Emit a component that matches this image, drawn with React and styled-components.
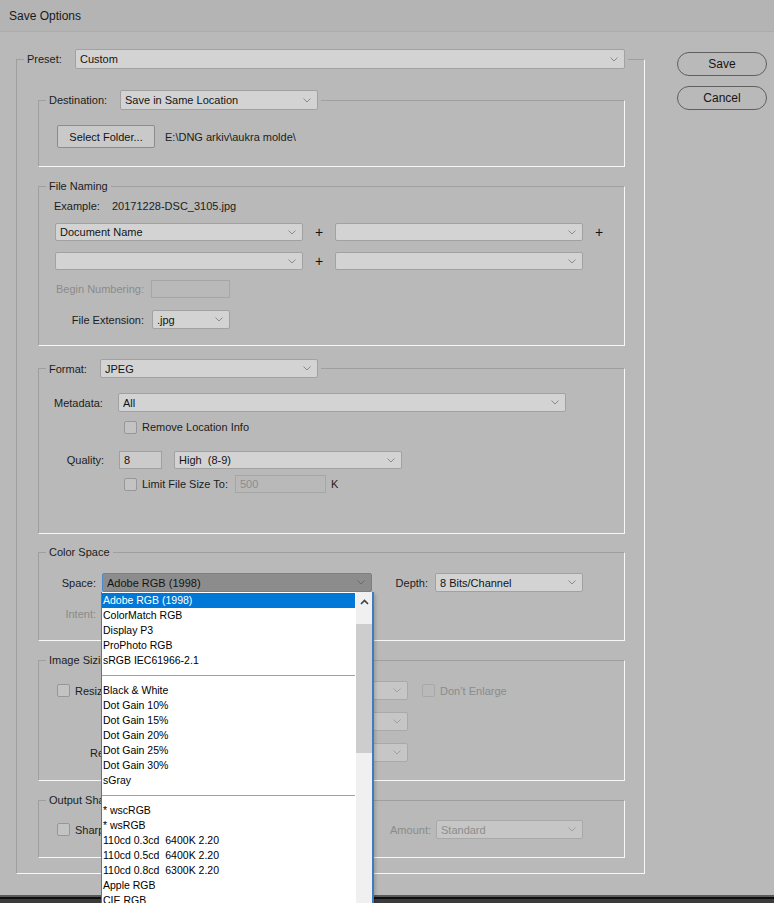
import React from "react";
import styled, { createGlobalStyle, css } from "styled-components";

const GlobalStyle = createGlobalStyle`
  html, body {
    margin: 0;
    padding: 0;
    background: #b9b9b9;
  }
  body {
    font-family: "Liberation Sans", Arial, sans-serif;
    font-size: 11px;
    color: #1c1c1c;
  }
  * {
    box-sizing: border-box;
  }
`;

const Window = styled.div`
  position: relative;
  width: 774px;
  height: 903px;
  overflow: hidden;
  display: flex;
  flex-direction: column;
  background: #b9b9b9;
`;

const TitleBar = styled.div`
  flex: none;
  height: 32px;
  padding-left: 9px;
  display: flex;
  align-items: center;
  font-size: 12px;
  color: #1a1a1a;
  background: #b4b4b4;
  border-bottom: 1px solid #acacac;
`;

const Body = styled.div`
  flex: 1;
  display: flex;
  align-items: flex-start;
  gap: 32px;
  padding: 17px 0 0 16px;
`;

const BottomStrip = styled.div`
  flex: none;
  height: 8px;
  background: linear-gradient(#5a5a5a 0 2px, #0e0e0e 2px 4px, #3b3b3b 4px);
`;

const Group = styled.fieldset`
  margin: 0;
  padding: 0;
  min-width: 0;
  flex: none;
  width: ${({ $w }) => ($w ? `${$w}px` : "auto")};
  height: ${({ $h }) => $h}px;
  margin-top: ${({ $mt }) => $mt || 0}px;
  border: 1px solid;
  border-color: #9f9f9f #f7f7f7 #f7f7f7 #9f9f9f;
`;

const Legend = styled.legend`
  margin-left: 7px;
  padding: 0 3px;
  line-height: 14px;
`;

const LegendRow = styled.div`
  display: flex;
  align-items: center;
`;

const Content = styled.div`
  display: flex;
  flex-direction: column;
  padding: ${({ $pad }) => $pad};
`;

const Row = styled.div`
  display: flex;
  align-items: center;
  gap: ${({ $gap }) => $gap || 0}px;
  margin-top: ${({ $mt }) => $mt || 0}px;
  padding-left: ${({ $pl }) => $pl || 0}px;
  line-height: 14px;
`;

const Caption = styled.span`
  flex: none;
  white-space: nowrap;
  width: ${({ $w }) => ($w ? `${$w}px` : "auto")};
  text-align: ${({ $right }) => ($right ? "right" : "left")};
  padding-right: ${({ $pr }) => $pr || 0}px;
  color: ${({ $disabled }) => ($disabled ? "#8b8b8b" : "#1c1c1c")};
`;

const selectVariants = {
  normal: css`
    background: #d3d3d3;
    border-color: #a1a1a1;
    color: #141414;
  `,
  disabled: css`
    background: #c6c6c6;
    border-color: #a9a9a9;
    color: #8d8d8d;
  `,
  focused: css`
    background: #8c8c8c;
    border-color: #4d89cf;
    color: #141414;
  `,
};

const SelectBox = styled.div`
  flex: none;
  width: ${({ $w }) => $w}px;
  height: ${({ $h }) => $h || 19}px;
  display: flex;
  align-items: center;
  justify-content: space-between;
  gap: 6px;
  padding: 0 6px 0 4px;
  border: 1px solid;
  border-radius: 2px;
  ${({ $variant }) => selectVariants[$variant || "normal"]}
`;

const SelectText = styled.span`
  overflow: hidden;
  white-space: pre;
  text-overflow: ellipsis;
`;

const Field = styled.div`
  flex: none;
  width: ${({ $w }) => $w}px;
  height: 18px;
  display: flex;
  align-items: center;
  padding-left: 4px;
  border: 1px solid ${({ $disabled }) => ($disabled ? "#a6a6a6" : "#a0a0a0")};
  background: ${({ $disabled }) => ($disabled ? "transparent" : "#cbcbcb")};
  color: ${({ $disabled }) => ($disabled ? "#8d8d8d" : "#141414")};
`;

const Check = styled.span`
  flex: none;
  width: 13px;
  height: 13px;
  margin-left: ${({ $ml }) => $ml || 0}px;
  border-radius: 2px;
  border: 1px solid ${({ $disabled }) => ($disabled ? "#a8a8a8" : "#979797")};
  background: ${({ $disabled }) => ($disabled ? "transparent" : "#c3c3c3")};
`;

const PushButton = styled.div`
  flex: none;
  width: 98px;
  height: 23px;
  display: flex;
  align-items: center;
  justify-content: center;
  border: 1px solid #8c8c8c;
  border-radius: 2px;
  background: #c9c9c9;
  color: #141414;
`;

const Plus = styled.span`
  flex: none;
  width: 32px;
  text-align: center;
  font-size: 14px;
  color: #111;
`;

const Spacer = styled.span`
  flex: none;
  width: ${({ $w }) => $w}px;
`;

const ButtonColumn = styled.div`
  display: flex;
  flex-direction: column;
  gap: 10px;
  margin-top: 3px;
`;

const PillButton = styled.div`
  width: 90px;
  height: 24px;
  display: flex;
  align-items: center;
  justify-content: center;
  border: 1px solid #5f5f5f;
  border-radius: 12px;
  font-size: 12px;
  color: #151515;
`;

const ListBox = styled.div`
  position: absolute;
  left: 101px;
  top: 592px;
  width: 273px;
  height: 320px;
  display: flex;
  background: #fff;
  border-left: 1px solid #3d7cc4;
  border-right: 2px solid #3d7cc4;
  box-shadow: 2px 2px 3px rgba(0, 0, 0, 0.15);
  font-size: 10.5px;
`;

const Items = styled.div`
  flex: 1;
  display: flex;
  flex-direction: column;
  padding-top: 1px;
  overflow: hidden;
`;

const Item = styled.div`
  flex: none;
  height: 15px;
  line-height: 15px;
  padding-left: 1px;
  white-space: pre;
  color: ${({ $selected }) => ($selected ? "#fff" : "#000")};
  background: ${({ $selected }) => ($selected ? "#0078d7" : "transparent")};
  margin-right: ${({ $selected }) => ($selected ? "1px" : "0")};
`;

const Separator = styled.div`
  flex: none;
  height: 15px;
  display: flex;
  align-items: center;
  padding-right: 1px;
  &::after {
    content: "";
    flex: 1;
    height: 1px;
    background: #a0a0a0;
  }
`;

const ScrollTrack = styled.div`
  flex: none;
  width: 16px;
  display: flex;
  flex-direction: column;
  background: #f0f0f0;
`;

const ScrollUp = styled.div`
  height: 18px;
  display: flex;
  align-items: center;
  justify-content: center;
  padding-top: 2px;
`;

const ScrollThumb = styled.div`
  margin-top: 14px;
  height: 129px;
  background: #cdcdcd;
`;

const Chevron = ({ color = "#8a8a8a" }) => (
  <svg width="8" height="5" viewBox="0 0 8 5" style={{ flex: "none" }}>
    <polyline points="0.5,0.5 4,4 7.5,0.5" fill="none" stroke={color} strokeWidth="1" />
  </svg>
);

const Select = ({ w, h, variant, children }) => (
  <SelectBox $w={w} $h={h} $variant={variant}>
    <SelectText>{children}</SelectText>
    <Chevron color={variant === "disabled" ? "#a0a0a0" : variant === "focused" ? "#6c6c6c" : "#8a8a8a"} />
  </SelectBox>
);

const colorSpaces = [
  "Adobe RGB (1998)",
  "ColorMatch RGB",
  "Display P3",
  "ProPhoto RGB",
  "sRGB IEC61966-2.1",
  null,
  "Black & White",
  "Dot Gain 10%",
  "Dot Gain 15%",
  "Dot Gain 20%",
  "Dot Gain 25%",
  "Dot Gain 30%",
  "sGray",
  null,
  "* wscRGB",
  "* wsRGB",
  "110cd 0.3cd  6400K 2.20",
  "110cd 0.5cd  6400K 2.20",
  "110cd 0.8cd  6300K 2.20",
  "Apple RGB",
  "CIE RGB",
];

const ColorSpaceList = () => (
  <ListBox>
    <Items>
      {colorSpaces.map((name, i) =>
        name === null ? (
          <Separator key={i} />
        ) : (
          <Item key={i} $selected={i === 0}>
            {name}
          </Item>
        )
      )}
    </Items>
    <ScrollTrack>
      <ScrollUp>
        <svg width="9" height="6" viewBox="0 0 9 6">
          <polyline points="1,5 4.5,1.5 8,5" fill="none" stroke="#404040" strokeWidth="1.6" />
        </svg>
      </ScrollUp>
      <ScrollThumb />
    </ScrollTrack>
  </ListBox>
);

const App = () => {
  return (
    <>
      <GlobalStyle />
      <Window>
        <TitleBar>Save Options</TitleBar>
        <Body>
          <Group $w={629} $h={825}>
            <Legend>
              <LegendRow>
                <Caption $w={48}>Preset:</Caption>
                <Select w={550} h={20}>Custom</Select>
              </LegendRow>
            </Legend>
            <Content $pad="21px 19px 0 21px">
              <Group $h={77}>
                <Legend>
                  <LegendRow>
                    <Caption $w={71}>Destination:</Caption>
                    <Select w={198} h={20}>Save in Same Location</Select>
                  </LegendRow>
                </Legend>
                <Content $pad="15px 0 0 18px">
                  <Row $gap={10}>
                    <PushButton>Select Folder...</PushButton>
                    <span>{"E:\\DNG arkiv\\aukra molde\\"}</span>
                  </Row>
                </Content>
              </Group>

              <Group $mt={12} $h={167}>
                <Legend>File Naming</Legend>
                <Content $pad="6px 0 0 15px">
                  <Row>
                    <Caption $w={58}>Example:</Caption>
                    <span>20171228-DSC_3105.jpg</span>
                  </Row>
                  <Row $mt={10} $pl={1}>
                    <Select w={248} h={18}>Document Name</Select>
                    <Plus>+</Plus>
                    <Select w={248} h={18}></Select>
                    <Plus>+</Plus>
                  </Row>
                  <Row $mt={11} $pl={1}>
                    <Select w={248} h={18}></Select>
                    <Plus>+</Plus>
                    <Select w={248} h={18}></Select>
                  </Row>
                  <Row $mt={10} $gap={7}>
                    <Caption $w={90} $right $disabled>
                      Begin Numbering:
                    </Caption>
                    <Field $w={79} $disabled />
                  </Row>
                  <Row $mt={12} $gap={8}>
                    <Caption $w={90} $right>
                      File Extension:
                    </Caption>
                    <Select w={78} h={19}>.jpg</Select>
                  </Row>
                </Content>
              </Group>

              <Group $mt={13} $h={175}>
                <Legend>
                  <LegendRow>
                    <Caption $w={51}>Format:</Caption>
                    <Select w={218} h={19}>JPEG</Select>
                  </LegendRow>
                </Legend>
                <Content $pad="15px 0 0 15px">
                  <Row>
                    <Caption $w={64}>Metadata:</Caption>
                    <Select w={448} h={19}>All</Select>
                  </Row>
                  <Row $mt={8} $pl={70} $gap={5}>
                    <Check />
                    <span>Remove Location Info</span>
                  </Row>
                  <Row $mt={17}>
                    <Caption $w={65} $right $pr={15}>
                      Quality:
                    </Caption>
                    <Field $w={43}>8</Field>
                    <Spacer $w={12} />
                    <Select w={228} h={18}>High  (8-9)</Select>
                  </Row>
                  <Row $mt={6} $pl={70} $gap={5}>
                    <Check />
                    <Caption $w={88}>Limit File Size To:</Caption>
                    <Field $w={91} $disabled>
                      500
                    </Field>
                    <span>K</span>
                  </Row>
                </Content>
              </Group>

              <Group $mt={11} $h={96}>
                <Legend>Color Space</Legend>
                <Content $pad="14px 0 0 15px">
                  <Row>
                    <Caption $w={48} $right $pr={6}>
                      Space:
                    </Caption>
                    <Select w={270} h={19} variant="focused">
                      Adobe RGB (1998)
                    </Select>
                    <Caption $w={63} $right $pr={7}>
                      Depth:
                    </Caption>
                    <Select w={148} h={19}>8 Bits/Channel</Select>
                  </Row>
                  <Row $mt={12}>
                    <Caption $w={48} $right $pr={6} $disabled>
                      Intent:
                    </Caption>
                    <Select w={270} h={19} variant="disabled">
                      Perceptual
                    </Select>
                  </Row>
                </Content>
              </Group>

              <Group $mt={12} $h={128}>
                <Legend>Image Sizing</Legend>
                <Content $pad="14px 0 0 18px">
                  <Row $gap={5}>
                    <Check />
                    <Caption $w={70}>Resize to Fit:</Caption>
                    <Select w={258} h={19} variant="disabled">
                      Width &amp; Height
                    </Select>
                    <Check $disabled $ml={9} />
                    <Caption $disabled>Don’t Enlarge</Caption>
                  </Row>
                  <Row $mt={12}>
                    <Caption $w={93} $right $pr={5} $disabled>
                      W:
                    </Caption>
                    <Field $w={50} $disabled>
                      2048
                    </Field>
                    <Caption $w={30} $right $pr={5} $disabled>
                      H:
                    </Caption>
                    <Field $w={50} $disabled>
                      2048
                    </Field>
                    <Spacer $w={10} />
                    <Select w={118} h={19} variant="disabled">
                      pixels
                    </Select>
                  </Row>
                  <Row $mt={12}>
                    <Caption $w={93} $right $pr={5}>
                      Resolution:
                    </Caption>
                    <Field $w={50}>240</Field>
                    <Spacer $w={10} />
                    <Select w={198} h={19} variant="disabled">
                      pixels/inch
                    </Select>
                  </Row>
                </Content>
              </Group>

              <Group $mt={12} $h={65}>
                <Legend>Output Sharpening</Legend>
                <Content $pad="13px 0 0 18px">
                  <Row $gap={5}>
                    <Check />
                    <Caption $w={70}>Sharpen For:</Caption>
                    <Select w={215} h={19} variant="disabled">
                      Screen
                    </Select>
                    <Caption $w={61} $right $disabled>
                      Amount:
                    </Caption>
                    <Select w={147} h={19} variant="disabled">
                      Standard
                    </Select>
                  </Row>
                </Content>
              </Group>
            </Content>
          </Group>

          <ButtonColumn>
            <PillButton>Save</PillButton>
            <PillButton>Cancel</PillButton>
          </ButtonColumn>
        </Body>
        <BottomStrip />
        <ColorSpaceList />
      </Window>
    </>
  );
};

export default App;
